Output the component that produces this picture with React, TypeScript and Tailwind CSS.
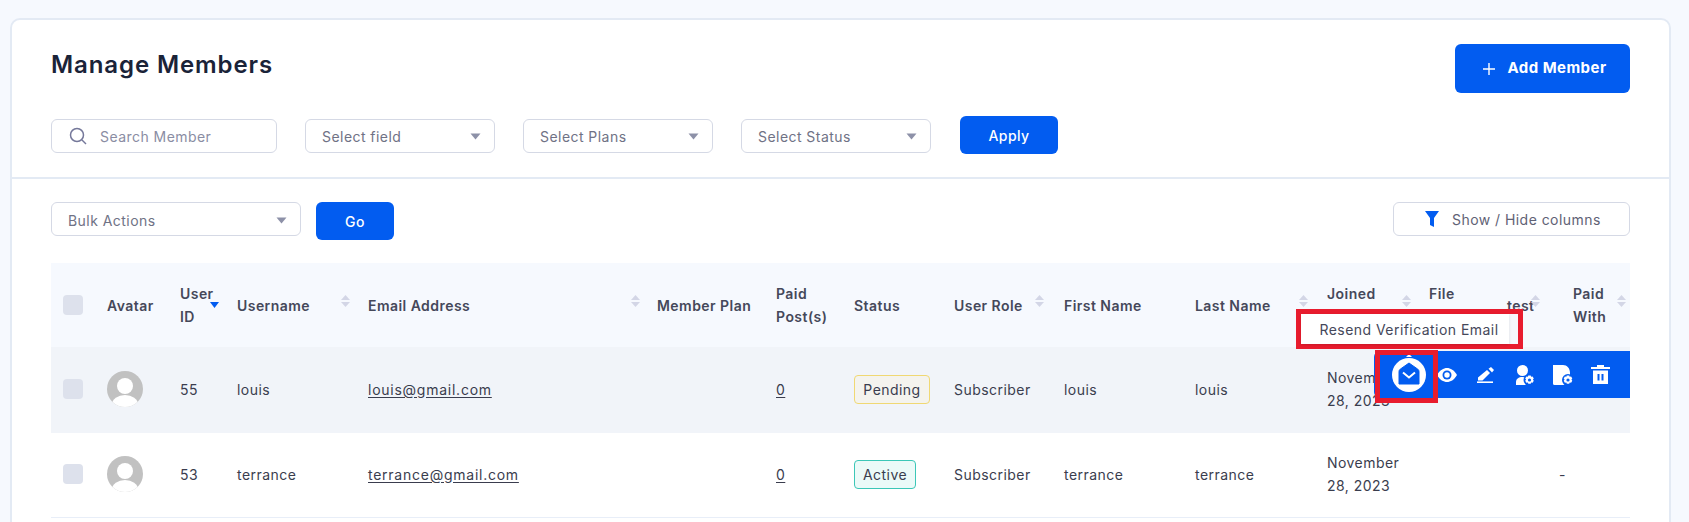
import { ReactNode } from "react";

const gridCols =
  "grid grid-cols-[56px_73px_57px_131px_289px_119px_78px_100px_110px_131px_132px_102px_78px_66px_57px]";

function Caret({ className = "" }: { className?: string }) {
  return (
    <svg width="11" height="7" viewBox="0 0 11 7" className={className}>
      <path d="M0.5 0.5h10L5.5 6.5z" fill="#8d91a8" />
    </svg>
  );
}

function SortIcon({ className = "" }: { className?: string }) {
  return (
    <svg width="9" height="12" viewBox="0 0 9 12" className={`shrink-0 ${className}`}>
      <path d="M4.5 0L9 5H0z" fill="#d3d6e6" />
      <path d="M4.5 12L0 7h9z" fill="#d3d6e6" />
    </svg>
  );
}

function Select({ label, width }: { label: string; width: string }) {
  return (
    <div
      className={`flex h-[34px] items-center justify-between rounded-[6px] border border-[#d5d9e5] bg-white pl-[16px] pr-[13px] text-[14px] text-[#6f7285] ${width}`}
    >
      <span className="mt-px">{label}</span>
      <Caret />
    </div>
  );
}

function Blue({ children, className = "" }: { children: ReactNode; className?: string }) {
  return (
    <button className={`flex items-center justify-center rounded-[6px] bg-[#025cf0] text-white ${className}`}>
      {children}
    </button>
  );
}

function Checkbox() {
  return <span className="ml-[12px] block h-[20px] w-[20px] rounded-[4px] bg-[#dde1ec]" />;
}

function Avatar() {
  return (
    <svg width="36" height="36" viewBox="0 0 36 36">
      <defs>
        <clipPath id="av">
          <circle cx="18" cy="18" r="18" />
        </clipPath>
      </defs>
      <circle cx="18" cy="18" r="18" fill="#c1c1c1" />
      <g clipPath="url(#av)" fill="#ffffff">
        <circle cx="18" cy="15" r="8" />
        <ellipse cx="18" cy="33" rx="13" ry="9" />
      </g>
    </svg>
  );
}

// small cog that sits on the corner of the user and file icons
function Gear({ x, y }: { x: number; y: number }) {
  return (
    <g transform={`translate(${x} ${y})`}>
      <circle r="6" fill="#025cf0" />
      <path d="M-1.200-4.600h2.400l.5 1.300 1.400-.2 1.200 2-.9 1.100.9 1.100-1.200 2-1.400-.2-.5 1.300h-2.400l-.5-1.300-1.400.2-1.200-2 .9-1.100-.9-1.100 1.200-2 1.400.2z" fill="white" />
      <circle r="1.600" fill="#025cf0" />
    </g>
  );
}

function HeadCell({ children, className = "" }: { children: ReactNode; className?: string }) {
  return <div className={`flex items-center text-[14px] font-semibold leading-[23px] text-[#45485a] ${className}`}>{children}</div>;
}

function Row({
  id,
  name,
  email,
  status,
  last,
}: {
  id: string;
  name: string;
  email: string;
  status: ReactNode;
  last?: ReactNode;
}) {
  return (
    <>
      <div className="flex items-center">
        <Checkbox />
      </div>
      <div className="flex items-center">
        <Avatar />
      </div>
      <div className="flex items-center">{id}</div>
      <div className="flex items-center">{name}</div>
      <div className="flex items-center tracking-[0.75px] underline underline-offset-2">{email}</div>
      <div />
      <div className="flex items-center underline underline-offset-2">0</div>
      <div className="flex items-center">{status}</div>
      <div className="flex items-center">Subscriber</div>
      <div className="flex items-center">{name}</div>
      <div className="flex items-center">{name}</div>
      <div className="flex items-center leading-[23px]">
        November
        <br />
        28, 2023
      </div>
      <div />
      <div className="flex items-center pl-[52px]">{last}</div>
      <div />
    </>
  );
}

export default function App() {
  return (
    <div className="h-[522px] overflow-hidden bg-[#f6f9fe] pl-[10px] pr-[18px] pt-[18px] font-['Inter',sans-serif] tracking-[0.45px]">
      <div className="h-[520px] rounded-t-[10px] border-2 border-[#e3eaf4] bg-white">
        <div className="border-b-2 border-[#e3eaf4] px-[39px] pb-[23px] pt-[24px]">
          <div className="flex items-start justify-between">
            <h1 className="pt-px text-[24px] font-semibold leading-[40px] tracking-[0.9px] text-[#1a2338]">Manage Members</h1>
            <Blue className="h-[49px] w-[175px] gap-[13px] pl-[4px] text-[15px] font-bold">
              <svg width="12" height="12" viewBox="0 0 12 12" stroke="white" strokeWidth="1.4">
                <path d="M6 0v12M0 6h12" />
              </svg>
              Add Member
            </Blue>
          </div>
          <div className="mt-[23px] flex items-start gap-7">
            <div className="mt-[3px] flex h-[34px] w-[226px] items-center gap-[13px] rounded-[6px] border border-[#d5d9e5] pl-[17px] text-[14px] text-[#8a8da3]">
              <svg width="18" height="18" viewBox="0 0 18 18" fill="none" stroke="#75789a" strokeWidth="1.5">
                <circle cx="8" cy="8" r="6.5" />
                <path d="M13 13l4 4" />
              </svg>
              Search Member
            </div>
            <Select label="Select field" width="mt-[3px] w-[190px]" />
            <Select label="Select Plans" width="mt-[3px] w-[190px]" />
            <Select label="Select Status" width="mt-[3px] w-[190px]" />
            <Blue className="ml-px h-[38px] w-[98px] text-[14px] font-medium">Apply</Blue>
          </div>
        </div>

        <div className="px-[39px] pt-[23px]">
          <div className="flex items-start">
            <Select label="Bulk Actions" width="w-[250px] pt-[2px]" />
            <Blue className="ml-[15px] h-[38px] w-[78px] text-[14px] font-medium">Go</Blue>
            <div className="ml-auto flex h-[34px] w-[237px] items-center gap-[13px] rounded-[6px] border border-[#d5d9e5] pl-[31px] text-[14px] text-[#5f6275]">
              <svg width="14" height="16" viewBox="0 0 14 16" fill="#025cf0">
                <path d="M0 0h14L9 7v9l-4-2V7z" />
              </svg>
              <span className="mt-px">Show / Hide columns</span>
            </div>
          </div>

          <div className={`${gridCols} relative z-0 mt-[23px] h-[84px] bg-[#f6f9fe]`}>
            <div className="flex items-center">
              <Checkbox />
            </div>
            <HeadCell>Avatar</HeadCell>
            <HeadCell className="justify-between pr-[18px]">
              <span className="w-[30px]">
                User
                <br />
                ID
              </span>
              <svg width="9" height="6" viewBox="0 0 9 6" className="shrink-0" fill="#025cf0">
                <path d="M0 0h9L4.5 6z" />
              </svg>
            </HeadCell>
            <HeadCell className="justify-between pr-[18px]">
              Username
              <SortIcon className="-mt-2" />
            </HeadCell>
            <HeadCell className="justify-between pr-[17px]">
              Email Address
              <SortIcon className="-mt-2" />
            </HeadCell>
            <HeadCell>Member Plan</HeadCell>
            <HeadCell>
              <span>
                Paid
                <br />
                Post(s)
              </span>
            </HeadCell>
            <HeadCell>Status</HeadCell>
            <HeadCell className="justify-between pr-[20px]">
              User Role
              <SortIcon className="-mt-2" />
            </HeadCell>
            <HeadCell>First Name</HeadCell>
            <HeadCell className="justify-between pr-[19px]">
              Last Name
              <SortIcon className="-mt-2" />
            </HeadCell>
            <HeadCell className="justify-between pr-[18px]">
              <span className="mb-[23px]">Joined</span>
              <SortIcon className="-mt-2" />
            </HeadCell>
            <HeadCell>
              <span className="mb-[23px]">File</span>
            </HeadCell>
            <HeadCell className="justify-between pr-[33px]">
              test
              <SortIcon className="-ml-[6px] -mt-2" />
            </HeadCell>
            <HeadCell className="justify-between pr-[4px]">
              <span>
                Paid
                <br />
                With
              </span>
              <SortIcon className="-mt-2" />
            </HeadCell>
          </div>

          <div className={`${gridCols} relative h-[86px] bg-[#f1f4f9] pb-[2px] text-[14px] text-[#3a3d4e]`}>
            <Row
              id="55"
              name="louis"
              email="louis@gmail.com"
              status={
                <span className="flex h-[29px] w-[76px] items-center justify-center rounded-[4px] border border-[#f0d873] bg-[#f4f3ee]">
                  Pending
                </span>
              }
            />

            {/* hovered row actions */}
            <div className="absolute right-0 top-[4px] flex h-[47px] w-[256px] items-center rounded-l-[6px] bg-[#025cf0] pl-[17px]">
              <svg width="36" height="36" viewBox="0 0 36 36" className="shrink-0 overflow-visible">
                <path d="M18 -3l3 3h-6z" fill="white" />
                <circle cx="18" cy="18" r="17" fill="white" />
                <path d="M8 14.500Q8 13 9.200 12.200L18 6l8.800 6.200Q28 13 28 14.500V27H8z" fill="#025cf0" stroke="#025cf0" strokeLinejoin="round" strokeWidth="1" />
                <path d="M12 15.500L18 20.500l6-5" fill="none" stroke="white" strokeWidth="2" />
              </svg>
              <svg width="20" height="14" viewBox="0 0 20 14" className="ml-[10px] shrink-0">
                <path d="M0 7C3 2 6.500 0 10 0s7 2 10 7c-3 5-6.500 7-10 7S3 12 0 7z" fill="white" />
                <circle cx="10" cy="7" r="4.500" fill="#025cf0" />
                <circle cx="10" cy="7" r="2.700" fill="white" />
              </svg>
              <svg width="18" height="16" viewBox="0 0 18 16" className="ml-[20px] shrink-0" fill="white">
                <path d="M1 13.500v-3L10 3l3 3-7.500 7.500z" />
                <path d="M11.500 1.800L14 0l3 3-2 2.500z" />
                <path d="M0 14.400h16V16H0z" />
              </svg>
              <svg width="20" height="20" viewBox="0 0 20 20" className="ml-[20px] shrink-0" fill="white">
                <circle cx="7.500" cy="5.500" r="5.500" />
                <path d="M1 20v-3c0-3 2.500-5 6.500-5s6.500 2 6.500 5v3z" />
                <Gear x={14.500} y={15} />
              </svg>
              <svg width="20" height="20" viewBox="0 0 20 20" className="ml-[18px] shrink-0" fill="white">
                <path d="M0 0h10c4 0 7 3 7 8v8H1.500A1.500 1.500 0 0 1 0 18.500z" />
                <path d="M0 1.500V18.500A1.500 1.500 0 0 0 1.500 20H16V10H0z" />
                <Gear x={15} y={15} />
              </svg>
              <svg width="19" height="19" viewBox="0 0 19 19" className="ml-[18px] shrink-0" fill="white">
                <path d="M6 0h7v2h6v2H0V2h6z" />
                <path d="M2 5.500h15V19H2zM6.500 9v6.500h2V9zM10.500 9v6.500h2V9z" fillRule="evenodd" />
              </svg>
            </div>

            {/* tooltip over the first action */}
            <div className="absolute left-[1245px] top-[-38px] h-[40px] w-[227px] border-[5px] border-[#e81c2e] bg-[#f6f8fc]">
              <div className="flex h-full w-[208px] items-center justify-center bg-white pl-[8px] text-[14px] text-[#45485a] shadow">
                Resend Verification Email
              </div>
            </div>
            <div className="absolute left-[1324px] top-[3px] h-[53px] w-[63px] border-[5px] border-[#e81c2e]" />
          </div>

          <div className={`${gridCols} h-[85px] border-b border-[#e8eef8] pb-[2px] text-[14px] text-[#3a3d4e]`}>
            <Row
              id="53"
              name="terrance"
              email="terrance@gmail.com"
              last="-"
              status={
                <span className="flex h-[29px] w-[62px] items-center justify-center rounded-[4px] border border-[#3cc7b7] bg-[#ebfaf8]">
                  Active
                </span>
              }
            />
          </div>
        </div>
      </div>
    </div>
  );
}
